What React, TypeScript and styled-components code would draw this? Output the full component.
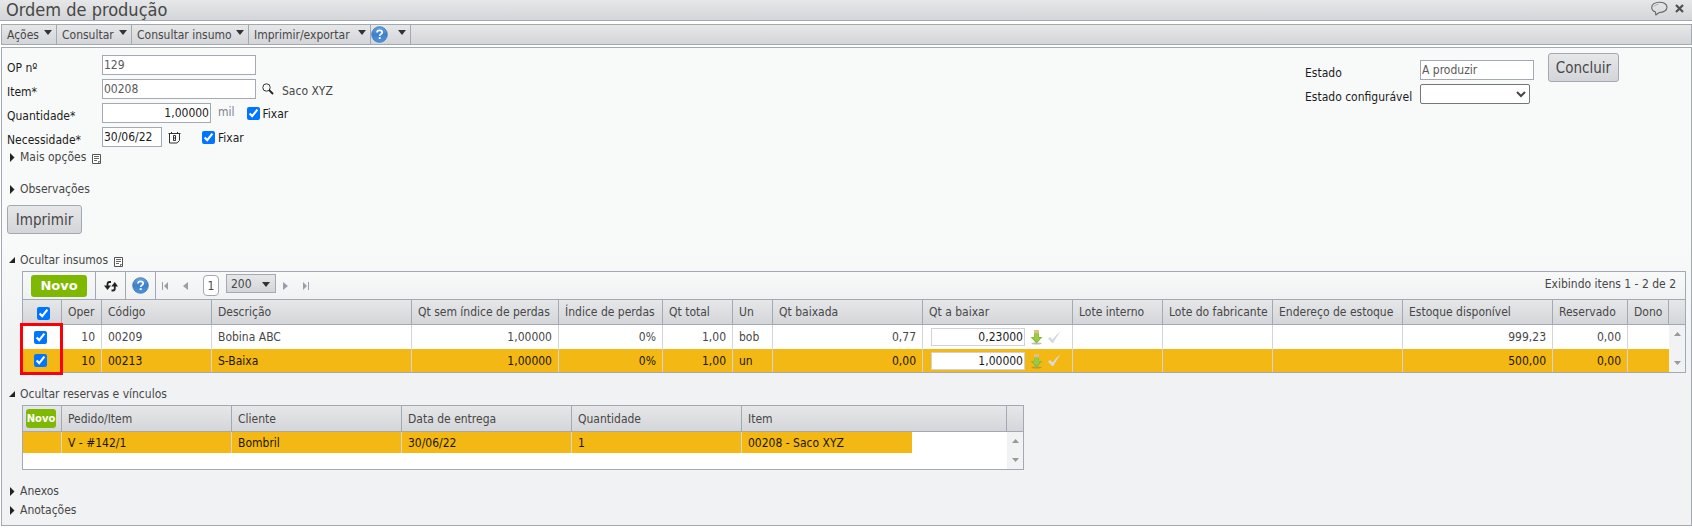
import React, { useState } from 'react';
import styled, { createGlobalStyle, css } from 'styled-components';

const line = '#a3a9b2';
const softLine = '#d3d5d9';
const bar = 'linear-gradient(#e6e7e9, #d3d5d8)';

const GlobalStyle = createGlobalStyle`
  * { box-sizing: border-box; }
  body {
    margin: 0;
    background: #fff;
    color: #474747;
    font: 12px/16px "DejaVu Sans Condensed", "DejaVu Sans", Tahoma, sans-serif;
  }
  button, input, select { font: inherit; color: inherit; margin: 0; }
  button { cursor: pointer; }
`;

const Page = styled.div`
  display: flex;
  flex-direction: column;
`;

const TitleBar = styled.header`
  display: flex;
  align-items: center;
  justify-content: space-between;
  height: 21px;
  padding: 0 8px 0 6px;
  background: ${bar};
  border-bottom: 1px solid ${line};
`;

const Title = styled.h1`
  margin: 0;
  font-size: 18px;
  line-height: 20px;
  font-weight: normal;
`;

const TitleActions = styled.div`
  display: flex;
  align-items: center;
  gap: 7px;
  padding-bottom: 4px;
`;

const IconButton = styled.button`
  display: inline-flex;
  align-items: center;
  justify-content: center;
  padding: 0;
  border: 0;
  background: none;
`;

const MenuBar = styled.nav`
  display: flex;
  height: 21px;
  margin: 3px 0 2px 1px;
  background: ${bar};
  border: 1px solid ${line};
`;

const MenuButton = styled.button<{ $width: number }>`
  display: flex;
  align-items: center;
  justify-content: space-between;
  width: ${(p) => p.$width}px;
  padding: 0 4px 0 5px;
  border: 0;
  border-right: 1px solid ${line};
  background: none;
  white-space: nowrap;
`;

const HelpMenuButton = styled(MenuButton)`
  padding-left: 0;
`;

const MenuArrow = styled.svg`
  flex: none;
  margin-bottom: 4px;
`;

const Panel = styled.main`
  display: flex;
  flex-direction: column;
  margin-left: 1px;
  padding: 5px 5px 7px;
  border: 1px solid ${line};
  background: linear-gradient(#f8faf9 200px, #f1f2f4 290px);
`;

const FormArea = styled.div`
  display: flex;
  justify-content: space-between;
`;

const Fields = styled.div`
  display: flex;
  flex-direction: column;
`;

const FieldRow = styled.div`
  display: flex;
  align-items: center;
  height: 24px;
`;

const FieldLabel = styled.label<{ $width: number }>`
  width: ${(p) => p.$width}px;
  padding-top: 5px;
  color: #1c1c1c;
`;

const TextInput = styled.input<{ $width: number; $number?: boolean; $dark?: boolean }>`
  width: ${(p) => p.$width}px;
  height: 20px;
  padding: 0 1px;
  border: 1px solid ${line};
  background: #fff;
  color: ${(p) => (p.$dark ? '#1c1c1c' : '#5a5a5a')};
  text-align: ${(p) => (p.$number ? 'right' : 'left')};
`;

const FieldUnit = styled.span`
  margin-left: 7px;
  padding-bottom: 2px;
  color: #7d828b;
`;

const FieldHint = styled.span`
  margin-left: 8px;
  padding-top: 3px;
`;

const FieldIcon = styled(IconButton)`
  margin-left: 6px;
`;

const CheckLabel = styled.label<{ $gap: number }>`
  display: flex;
  align-items: center;
  gap: 3px;
  margin-left: ${(p) => p.$gap}px;
  color: #1c1c1c;
  span { padding-top: 2px; }
`;

const Tick = styled.input.attrs({ type: 'checkbox' })`
  width: 13px;
  height: 13px;
  flex: none;
`;

const StateArea = styled.div`
  display: flex;
  gap: 14px;
  padding-right: 67px;
`;

const StateFields = styled(Fields)`
  padding-top: 5px;
`;

const StateSelect = styled.select`
  width: 110px;
  height: 20px;
  border: 1px solid #767676;
  border-radius: 2px;
  background: #fff;
`;

const PushButton = styled.button<{ $width: number }>`
  width: ${(p) => p.$width}px;
  height: 29px;
  padding: 0;
  border: 1px solid ${line};
  border-radius: 3px;
  background: ${bar};
  font-size: 15px;
  line-height: 20px;
`;

const Sections = styled.div`
  display: flex;
  flex-direction: column;
  align-items: flex-start;
`;

const SectionToggle = styled.button<{ $space?: number }>`
  display: flex;
  align-items: center;
  gap: 5px;
  height: 16px;
  margin-top: ${(p) => p.$space ?? 0}px;
  padding: 0 0 0 2px;
  border: 0;
  background: none;
`;

const NoteMark = styled.svg`
  margin: 3px 0 0 1px;
`;

const PrintButton = styled(PushButton)`
  margin-top: 8px;
`;

const GridBox = styled.section`
  position: relative;
  width: 100%;
  margin-top: 3px;
  padding-left: 15px;
`;

const GridFrame = styled.div<{ $maxWidth?: number }>`
  position: relative;
  max-width: ${(p) => (p.$maxWidth ? `${p.$maxWidth}px` : 'none')};
  border: 1px solid ${line};
`;

const GridToolbar = styled.div`
  display: flex;
  align-items: stretch;
  height: 28px;
  border-bottom: 1px solid ${line};
  background: linear-gradient(#f8faf9, #f0f1f3);
`;

const ToolCell = styled.div<{ $width: number }>`
  display: flex;
  align-items: center;
  justify-content: center;
  width: ${(p) => p.$width}px;
  border-right: 1px solid ${line};
`;

const NewButton = styled.button<{ $small?: boolean }>`
  padding: 0;
  border: 0;
  border-radius: 3px;
  background: #7fb800;
  color: #fff;
  font-family: "DejaVu Sans", Verdana, sans-serif;
  font-weight: bold;
  ${(p) =>
    p.$small
      ? css`width: 30px; height: 19px; margin-right: 2px; font-size: 10px;`
      : css`width: 56px; height: 22px; font-size: 13px;`}
`;

const Pager = styled.div`
  display: flex;
  align-items: center;
  flex: 1;
  padding-left: 6px;
`;

const PagerButton = styled(IconButton)<{ $after: number }>`
  margin-right: ${(p) => p.$after}px;
`;

const PageNumber = styled.button`
  width: 16px;
  height: 21px;
  margin-right: 7px;
  padding: 0;
  border: 1px solid ${line};
  border-radius: 4px;
  background: #fff;
`;

const PageSize = styled.div`
  position: relative;
  display: flex;
  margin: 0 7px 4px 0;
`;

const PageSizeSelect = styled.select`
  appearance: none;
  width: 50px;
  height: 19px;
  padding: 0 4px;
  border: 1px solid ${line};
  border-radius: 0;
  background: ${bar};
`;

const PageSizeArrow = styled.svg`
  position: absolute;
  right: 6px;
  top: 8px;
  pointer-events: none;
`;

const PagerStatus = styled.span`
  margin: 0 9px 3px auto;
`;

const Table = styled.table`
  width: 100%;
  table-layout: fixed;
  border-collapse: separate;
  border-spacing: 0;
`;

const HeadCell = styled.th<{ $tall?: boolean; $center?: boolean }>`
  height: ${(p) => (p.$tall ? 26 : 25)}px;
  padding: ${(p) => (p.$center ? '0' : '0 0 0 6px')};
  border-right: 1px solid ${line};
  border-bottom: 1px solid ${line};
  text-align: ${(p) => (p.$center ? 'center' : 'left')};
  font-weight: normal;
  white-space: nowrap;
  &:last-child { border-right: 0; }
`;

const HeadTickCell = styled(HeadCell)`
  padding: 2px 0 0 2px;
  input { display: block; margin: 0 auto; }
`;

const HeadRow = styled.tr`
  background: ${bar};
`;

const BodyRow = styled.tr<{ $selected?: boolean; $height: number }>`
  height: ${(p) => p.$height}px;
  background: ${(p) => (p.$selected ? '#f4b814' : '#fff')};
  color: ${(p) => (p.$selected ? '#1c1600' : '#474747')};
`;

const Cell = styled.td<{ $align?: 'right' | 'center'; $last?: boolean }>`
  padding: 0 6px;
  border-right: ${(p) => (p.$last ? '0' : `1px solid ${softLine}`)};
  text-align: ${(p) => p.$align ?? 'left'};
  white-space: nowrap;
`;

const CheckCell = styled(Cell)`
  padding: 0 3px 0 0;
  text-align: center;
  input { display: block; margin: 0 auto; }
`;

const BlankCell = styled.td`
  padding: 0;
  background: #fff;
`;

const ScrollCell = styled.td`
  padding: 0;
  background: #f1f2f4;
`;

const ScrollTrack = styled.div<{ $gap: number }>`
  display: flex;
  flex-direction: column;
  align-items: center;
  gap: ${(p) => p.$gap}px;
`;

const QuantityEdit = styled.div`
  display: flex;
  align-items: center;
  gap: 5px;
  padding-left: 2px;
`;

const QuantityInput = styled(TextInput)`
  height: 18px;
  border: 1px solid #cfd2d6;
  color: #1c1c1c;
`;

const Highlight = styled.div`
  position: absolute;
  left: -3px;
  top: 51px;
  width: 43px;
  height: 52px;
  border: 3px solid #fb0007;
  pointer-events: none;
`;

const DownTriangle = () => (
  <MenuArrow width="8" height="5" viewBox="0 0 8 5" aria-hidden="true">
    <path d="M0 0h8L4 5z" fill="#333" />
  </MenuArrow>
);

const HelpIcon = () => (
  <svg width="17" height="17" viewBox="0 0 17 17" aria-hidden="true">
    <defs>
      <linearGradient id="help" x1="0" y1="0" x2="0" y2="1">
        <stop offset="0" stopColor="#6aa5e0" />
        <stop offset="0.5" stopColor="#3f80cd" />
        <stop offset="1" stopColor="#4a96dc" />
      </linearGradient>
    </defs>
    <circle cx="8.5" cy="8.5" r="7.8" fill="url(#help)" stroke="#3670b8" strokeWidth="0.8" />
    <path d="M6 6.6C6 5 7.1 4.3 8.6 4.3s2.6.8 2.6 2.1c0 1.7-2.5 1.8-2.5 3.5" fill="none" stroke="#fff" strokeWidth="1.7" />
    <rect x="7.7" y="11.2" width="2" height="1.8" fill="#fff" />
  </svg>
);

const SpeechIcon = () => (
  <svg width="17" height="15" viewBox="0 0 17 15" aria-hidden="true">
    <path d="M4.500 11C2 10 .7 8.500.7 6.400.7 3.300 4 1.200 8.300 1.200s7.700 2 7.700 5-3.400 5.300-7.700 5.300L4.800 14z" fill="none" stroke="#666" strokeWidth="1.100" strokeLinejoin="round" />
    <path d="M3 5.600C3.900 4.200 5.700 3.400 7.500 3.300" fill="none" stroke="#999" strokeWidth=".8" />
  </svg>
);

const CloseIcon = () => (
  <svg width="9" height="9" viewBox="0 0 9 9" aria-hidden="true">
    <path d="M1 1l7 7M8 1L1 8" stroke="#505050" strokeWidth="2.200" />
  </svg>
);

const SearchIcon = () => (
  <svg width="12" height="12" viewBox="0 0 12 12" aria-hidden="true">
    <circle cx="4.500" cy="4.500" r="3.700" fill="none" stroke="#333" strokeWidth="1" />
    <path d="M7.200 7.200L11 11" stroke="#222" strokeWidth="1.900" />
  </svg>
);

const CalendarIcon = () => (
  <svg width="13" height="13" viewBox="0 0 13 13" aria-hidden="true">
    <path d="M1.500 2v10H9l2.500-2.500V2M.5 2.500h12M3.500 1v1.500M9.500 1v1.500" fill="none" stroke="#333" />
    <path d="M5.500 4.500h2v5h-2zM5.500 7h2" fill="none" stroke="#333" />
  </svg>
);

const NoteIcon = () => (
  <NoteMark width="9" height="10" viewBox="0 0 9 10" aria-hidden="true">
    <path d="M.5.500h8v9H.5z" fill="#fff" stroke="#555" />
    <path d="M2 2.500h5M2 4.500h5M2 6.500h3" fill="none" stroke="#666" />
    <path d="M6 9V7h2.500L6.500 9z" fill="#777" />
  </NoteMark>
);

const ClosedArrow = () => (
  <svg width="6" height="9" viewBox="0 0 6 9" aria-hidden="true">
    <path d="M1 0v9l4.500-4.500z" fill="#222" />
  </svg>
);

const OpenArrow = () => (
  <svg width="6" height="6" viewBox="0 0 6 6" aria-hidden="true">
    <path d="M6 0v6H0z" fill="#222" />
  </svg>
);

const RefreshIcon = () => (
  <svg width="14" height="12" viewBox="0 0 14 12" aria-hidden="true">
    <path d="M7 2H5.500Q3.500 2 3.500 4v3" fill="none" stroke="#222" strokeWidth="1.800" />
    <path d="M0 5.500h7L3.500 10z" fill="#222" />
    <path d="M7.500 10.500H9q1.800 0 1.800-2V5.500" fill="none" stroke="#222" strokeWidth="1.800" />
    <path d="M7.300 6.500L10.800 2l3.200 4.500z" fill="#222" />
  </svg>
);

type PagerKind = 'first' | 'prev' | 'next' | 'last';
const PagerIcon = ({ kind }: { kind: PagerKind }) => {
  const paths: Record<PagerKind, string> = {
    first: 'M0 0h1v8H0zM6 0v8L2 4z',
    prev: 'M5 0v8L0 4z',
    next: 'M0 0v8l5-4z',
    last: 'M0 0v8l4-4zM5 0h1v8H5z',
  };
  const width = kind === 'first' || kind === 'last' ? 6 : 5;
  return (
    <svg width={width} height="8" viewBox={`0 0 ${width} 8`} aria-hidden="true">
      <path d={paths[kind]} fill="#999fa8" />
    </svg>
  );
};

const WithdrawIcon = () => (
  <svg width="13" height="16" viewBox="0 0 13 16" aria-hidden="true">
    <ellipse cx="6.500" cy="14.500" rx="5" ry="1" fill="#777" opacity=".5" />
    <path d="M4 1h5v4H4z" fill="#d9c382" />
    <path d="M4 4.500h5V8h3.500l-6 6.500L.5 8H4z" fill="#86bd2c" />
    <path d="M4.500 5h4v4h1.500L6.500 12.500 3 9h1.500z" fill="#9acb46" />
  </svg>
);

const ConfirmIcon = () => (
  <svg width="13" height="13" viewBox="0 0 13 13" aria-hidden="true">
    <path d="M0 7.500L2 6l2.500 2.500Q7.500 4 12.500.5 8.500 6 5.200 12H4z" fill="#d9dadc" />
  </svg>
);

const ScrollArrows = ({ gap }: { gap: number }) => (
  <ScrollTrack $gap={gap}>
    <IconButton type="button" aria-label="Rolar para cima">
      <svg width="7" height="4" viewBox="0 0 7 4"><path d="M3.500 0L7 4H0z" fill="#999" /></svg>
    </IconButton>
    <IconButton type="button" aria-label="Rolar para baixo">
      <svg width="7" height="4" viewBox="0 0 7 4"><path d="M0 0h7L3.500 4z" fill="#999" /></svg>
    </IconButton>
  </ScrollTrack>
);

const menus = [
  { label: 'Ações', width: 55 },
  { label: 'Consultar', width: 75 },
  { label: 'Consultar insumo', width: 117 },
  { label: 'Imprimir/exportar', width: 122 },
];

const supplyColumns: [string, number | undefined][] = [
  ['Oper', 40],
  ['Código', 110],
  ['Descrição', undefined],
  ['Qt sem índice de perdas', 147],
  ['Índice de perdas', 104],
  ['Qt total', 70],
  ['Un', 40],
  ['Qt baixada', 150],
  ['Qt a baixar', 150],
  ['Lote interno', 90],
  ['Lote do fabricante', 110],
  ['Endereço de estoque', 130],
  ['Estoque disponível', 150],
  ['Reservado', 75],
  ['Dono', 41],
];

const supplies = [
  { oper: 10, code: '00209', name: 'Bobina ABC', qty: '1,00000', loss: '0%', total: '1,00', unit: 'bob', taken: '0,77', toTake: '0,23000', stock: '999,23', reserved: '0,00' },
  { oper: 10, code: '00213', name: 'S-Baixa', qty: '1,00000', loss: '0%', total: '1,00', unit: 'un', taken: '0,00', toTake: '1,00000', stock: '500,00', reserved: '0,00' },
];

function SupplyGrid() {
  const [checked, setChecked] = useState([true, true]);
  const all = checked.every(Boolean);
  return (
    <GridBox>
      <GridFrame>
        <GridToolbar>
          <ToolCell $width={73}><NewButton type="button">Novo</NewButton></ToolCell>
          <ToolCell $width={30}><IconButton type="button" aria-label="Atualizar"><RefreshIcon /></IconButton></ToolCell>
          <ToolCell $width={30}><IconButton type="button" aria-label="Ajuda"><HelpIcon /></IconButton></ToolCell>
          <Pager>
            <PagerButton type="button" $after={15} aria-label="Primeira página"><PagerIcon kind="first" /></PagerButton>
            <PagerButton type="button" $after={15} aria-label="Página anterior"><PagerIcon kind="prev" /></PagerButton>
            <PageNumber type="button">1</PageNumber>
            <PageSize>
              <PageSizeSelect aria-label="Itens por página" defaultValue="200"><option>200</option></PageSizeSelect>
              <PageSizeArrow width="8" height="5" viewBox="0 0 8 5"><path d="M0 0h8L4 5z" fill="#333" /></PageSizeArrow>
            </PageSize>
            <PagerButton type="button" $after={15} aria-label="Próxima página"><PagerIcon kind="next" /></PagerButton>
            <PagerButton type="button" $after={0} aria-label="Última página"><PagerIcon kind="last" /></PagerButton>
            <PagerStatus>Exibindo itens 1 - 2 de 2</PagerStatus>
          </Pager>
        </GridToolbar>
        <Table>
          <colgroup>
            <col width={39} />
            {supplyColumns.map(([name, width]) => <col key={name} width={width} />)}
            <col width={16} />
          </colgroup>
          <thead>
            <HeadRow>
              <HeadTickCell>
                <Tick aria-label="Selecionar todos" checked={all} onChange={() => setChecked([!all, !all])} />
              </HeadTickCell>
              {supplyColumns.map(([name]) => <HeadCell key={name}>{name}</HeadCell>)}
              <HeadCell />
            </HeadRow>
          </thead>
          <tbody>
            {supplies.map((s, i) => (
              <BodyRow key={s.code} $selected={i === 1} $height={i === 1 ? 23 : 24}>
                <CheckCell>
                  <Tick
                    aria-label={`Selecionar ${s.name}`}
                    checked={checked[i]}
                    onChange={() => setChecked(checked.map((c, n) => (n === i ? !c : c)))}
                  />
                </CheckCell>
                <Cell $align="right">{s.oper}</Cell>
                <Cell>{s.code}</Cell>
                <Cell>{s.name}</Cell>
                <Cell $align="right">{s.qty}</Cell>
                <Cell $align="right">{s.loss}</Cell>
                <Cell $align="right">{s.total}</Cell>
                <Cell>{s.unit}</Cell>
                <Cell $align="right">{s.taken}</Cell>
                <Cell>
                  <QuantityEdit>
                    <QuantityInput $width={94} $number aria-label={`Qt a baixar de ${s.name}`} defaultValue={s.toTake} />
                    <IconButton type="button" aria-label="Baixar"><WithdrawIcon /></IconButton>
                    <IconButton type="button" aria-label="Confirmar"><ConfirmIcon /></IconButton>
                  </QuantityEdit>
                </Cell>
                <Cell />
                <Cell />
                <Cell />
                <Cell $align="right">{s.stock}</Cell>
                <Cell $align="right">{s.reserved}</Cell>
                <Cell $last />
                {i === 0 && <ScrollCell rowSpan={2}><ScrollArrows gap={25} /></ScrollCell>}
              </BodyRow>
            ))}
          </tbody>
        </Table>
        <Highlight />
      </GridFrame>
    </GridBox>
  );
}

const ReservationGrid = () => (
  <GridBox>
    <GridFrame $maxWidth={1002}>
      <Table>
        <colgroup>
          <col width={39} />
          <col width={170} />
          <col width={170} />
          <col width={170} />
          <col width={170} />
          <col width={170} />
          <col />
          <col width={16} />
        </colgroup>
        <thead>
          <HeadRow>
            <HeadCell $tall $center><NewButton $small type="button">Novo</NewButton></HeadCell>
            <HeadCell $tall>Pedido/Item</HeadCell>
            <HeadCell $tall>Cliente</HeadCell>
            <HeadCell $tall>Data de entrega</HeadCell>
            <HeadCell $tall>Quantidade</HeadCell>
            <HeadCell $tall colSpan={2}>Item</HeadCell>
            <HeadCell $tall />
          </HeadRow>
        </thead>
        <tbody>
          <BodyRow $selected $height={21}>
            <Cell />
            <Cell>V - #142/1</Cell>
            <Cell>Bombril</Cell>
            <Cell>30/06/22</Cell>
            <Cell>1</Cell>
            <Cell $last>00208 - Saco XYZ</Cell>
            <BlankCell />
            <ScrollCell rowSpan={2}><ScrollArrows gap={15} /></ScrollCell>
          </BodyRow>
          <BodyRow $height={16}>
            <BlankCell colSpan={7} />
          </BodyRow>
        </tbody>
      </Table>
    </GridFrame>
  </GridBox>
);

export default function App() {
  return (
    <Page>
      <GlobalStyle />
      <TitleBar>
        <Title>Ordem de produção</Title>
        <TitleActions>
          <IconButton type="button" aria-label="Comentários"><SpeechIcon /></IconButton>
          <IconButton type="button" aria-label="Fechar"><CloseIcon /></IconButton>
        </TitleActions>
      </TitleBar>
      <MenuBar>
        {menus.map((m) => (
          <MenuButton key={m.label} type="button" $width={m.width}>{m.label}<DownTriangle /></MenuButton>
        ))}
        <HelpMenuButton type="button" $width={40} aria-label="Ajuda"><HelpIcon /><DownTriangle /></HelpMenuButton>
      </MenuBar>
      <Panel>
        <FormArea>
          <Fields>
            <FieldRow>
              <FieldLabel $width={95} htmlFor="op">OP nº</FieldLabel>
              <TextInput id="op" $width={154} defaultValue="129" />
            </FieldRow>
            <FieldRow>
              <FieldLabel $width={95} htmlFor="item">Item*</FieldLabel>
              <TextInput id="item" $width={154} defaultValue="00208" />
              <FieldIcon type="button" aria-label="Pesquisar item"><SearchIcon /></FieldIcon>
              <FieldHint>Saco XYZ</FieldHint>
            </FieldRow>
            <FieldRow>
              <FieldLabel $width={95} htmlFor="qty">Quantidade*</FieldLabel>
              <TextInput id="qty" $width={109} $number $dark defaultValue="1,00000" />
              <FieldUnit>mil</FieldUnit>
              <CheckLabel $gap={12}><Tick defaultChecked /><span>Fixar</span></CheckLabel>
            </FieldRow>
            <FieldRow>
              <FieldLabel $width={95} htmlFor="need">Necessidade*</FieldLabel>
              <TextInput id="need" $width={60} $dark defaultValue="30/06/22" />
              <FieldIcon type="button" aria-label="Abrir calendário"><CalendarIcon /></FieldIcon>
              <CheckLabel $gap={21}><Tick defaultChecked /><span>Fixar</span></CheckLabel>
            </FieldRow>
          </Fields>
          <StateArea>
            <StateFields>
              <FieldRow>
                <FieldLabel $width={115} htmlFor="state">Estado</FieldLabel>
                <TextInput id="state" $width={114} defaultValue="A produzir" />
              </FieldRow>
              <FieldRow>
                <FieldLabel $width={115} htmlFor="custom-state">Estado configurável</FieldLabel>
                <StateSelect id="custom-state"><option /></StateSelect>
              </FieldRow>
            </StateFields>
            <PushButton type="button" $width={71}>Concluir</PushButton>
          </StateArea>
        </FormArea>
        <Sections>
          <SectionToggle type="button"><ClosedArrow />Mais opções<NoteIcon /></SectionToggle>
          <SectionToggle type="button" $space={16}><ClosedArrow />Observações</SectionToggle>
          <PrintButton type="button" $width={75}>Imprimir</PrintButton>
          <SectionToggle type="button" $space={18}><OpenArrow />Ocultar insumos<NoteIcon /></SectionToggle>
          <SupplyGrid />
          <SectionToggle type="button" $space={13}><OpenArrow />Ocultar reservas e vínculos</SectionToggle>
          <ReservationGrid />
          <SectionToggle type="button" $space={13}><ClosedArrow />Anexos</SectionToggle>
          <SectionToggle type="button" $space={3}><ClosedArrow />Anotações</SectionToggle>
        </Sections>
      </Panel>
    </Page>
  );
}
